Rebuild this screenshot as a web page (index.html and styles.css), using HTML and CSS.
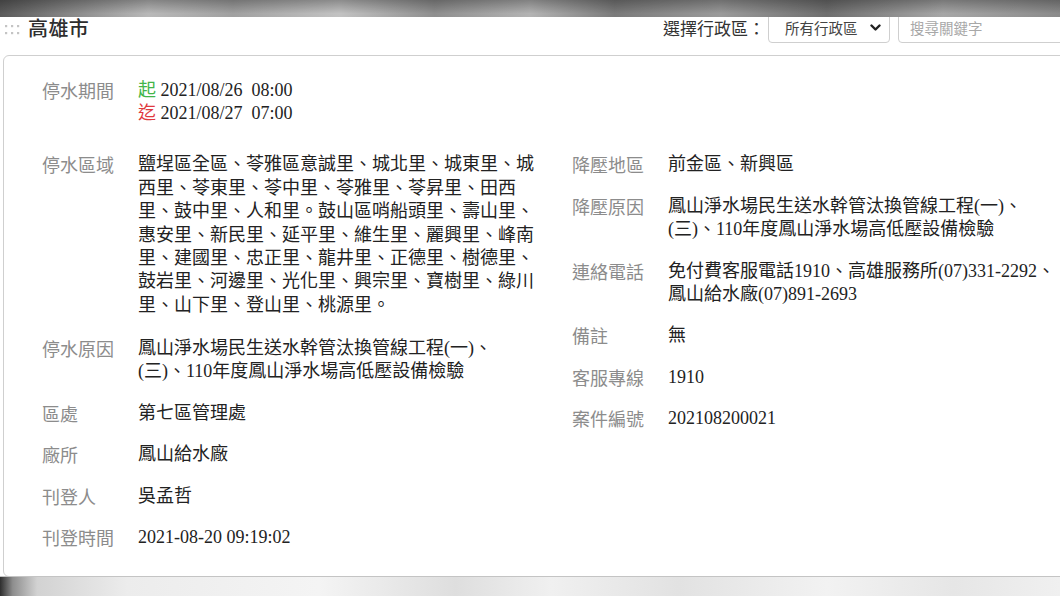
FILE: index.html
```html
<!DOCTYPE html>
<html lang="zh-Hant">
<head>
<meta charset="utf-8">
<title>高雄市 停水資訊</title>
<link rel="stylesheet" href="styles.css">
</head>
<body>
<div class="band-top"></div>
<div class="page">
  <header class="head">
    <div class="title-wrap">
      <svg class="grip" width="16" height="14" viewBox="0 0 16 14">
        <g fill="#c4c4c4">
          <rect x="0" y="3" width="2.2" height="2.2"/><rect x="6" y="3" width="2.2" height="2.2"/><rect x="12" y="3" width="2.2" height="2.2"/>
          <rect x="0" y="10" width="2.2" height="2.2"/><rect x="6" y="10" width="2.2" height="2.2"/><rect x="12" y="10" width="2.2" height="2.2"/>
        </g>
      </svg>
      <h1 class="title">高雄市</h1>
    </div>
    <div class="filters">
      <span class="filter-label">選擇行政區：</span>
      <div class="select">
        <span>所有行政區</span>
        <svg class="chev" width="11" height="8" viewBox="0 0 11 8"><path d="M1.5 1.5 L5.5 5.5 L9.5 1.5" fill="none" stroke="#222" stroke-width="2.4" stroke-linecap="round" stroke-linejoin="round"/></svg>
      </div>
      <div class="search">搜尋關鍵字</div>
    </div>
  </header>

  <section class="card">
    <div class="row period">
      <div class="label">停水期間</div>
      <div class="value">
        <div><span class="start">起</span> 2021/08/26&nbsp; 08:00</div>
        <div><span class="end">迄</span> 2021/08/27&nbsp; 07:00</div>
      </div>
    </div>
    <div class="cols">
      <div class="col">
        <div class="row">
          <div class="label">停水區域</div>
          <div class="value">鹽埕區全區、苓雅區意誠里、城北里、城東里、城西里、苓東里、苓中里、苓雅里、苓昇里、田西里、鼓中里、人和里。鼓山區哨船頭里、壽山里、惠安里、新民里、延平里、維生里、麗興里、峰南里、建國里、忠正里、龍井里、正德里、樹德里、鼓岩里、河邊里、光化里、興宗里、寶樹里、綠川里、山下里、登山里、桃源里。</div>
        </div>
        <div class="row gap-more">
          <div class="label">停水原因</div>
          <div class="value">鳳山淨水場民生送水幹管汰換管線工程(一)、<br>(三)、110年度鳳山淨水場高低壓設備檢驗</div>
        </div>
        <div class="row">
          <div class="label">區處</div>
          <div class="value">第七區管理處</div>
        </div>
        <div class="row">
          <div class="label">廠所</div>
          <div class="value">鳳山給水廠</div>
        </div>
        <div class="row">
          <div class="label">刊登人</div>
          <div class="value">吳孟哲</div>
        </div>
        <div class="row">
          <div class="label">刊登時間</div>
          <div class="value">2021-08-20 09:19:02</div>
        </div>
      </div>
      <div class="col">
        <div class="row">
          <div class="label">降壓地區</div>
          <div class="value">前金區、新興區</div>
        </div>
        <div class="row">
          <div class="label">降壓原因</div>
          <div class="value">鳳山淨水場民生送水幹管汰換管線工程(一)、<br>(三)、110年度鳳山淨水場高低壓設備檢驗</div>
        </div>
        <div class="row">
          <div class="label">連絡電話</div>
          <div class="value">免付費客服電話1910、高雄服務所(07)331-2292、<br>鳳山給水廠(07)891-2693</div>
        </div>
        <div class="row">
          <div class="label">備註</div>
          <div class="value">無</div>
        </div>
        <div class="row">
          <div class="label">客服專線</div>
          <div class="value">1910</div>
        </div>
        <div class="row">
          <div class="label">案件編號</div>
          <div class="value">202108200021</div>
        </div>
      </div>
    </div>
  </section>
</div>
<div class="band-bottom"></div>
</body>
</html>
```

FILE: styles.css
```css
html, body {
  margin: 0;
  padding: 0;
  overflow: hidden;
  background: #ffffff;
}
body {
  font-family: "Liberation Serif", "Noto Sans CJK TC", serif;
  color: #222;
  width: 1060px;
  height: 596px;
}
.page {
  width: 1090px;
}
.head {
  height: 55px;
  display: flex;
  align-items: center;
  justify-content: space-between;
}
.title-wrap {
  display: flex;
  align-items: center;
  padding-left: 5px;
}
.grip {
  margin-top: 3px;
}
.title {
  margin: 0 0 0 7px;
  font-family: "Noto Sans CJK TC", sans-serif;
  font-size: 20px;
  font-weight: 500;
  color: #2e2e2e;
  letter-spacing: 0.4px;
  line-height: 1;
}
.filters {
  display: flex;
  align-items: center;
  font-family: "Noto Sans CJK TC", sans-serif;
}
.filter-label {
  font-size: 17px;
  color: #333;
  margin-right: 3px;
}
.select {
  width: 122px;
  height: 30px;
  box-sizing: border-box;
  border: 1px solid #cfcfcf;
  border-radius: 4px;
  display: flex;
  align-items: center;
  justify-content: space-between;
  padding: 0 8px 0 16px;
  font-size: 14.5px;
  color: #444;
}
.chev {
  margin-top: 1px;
}
.search {
  width: 192px;
  height: 30px;
  box-sizing: border-box;
  border: 1px solid #cfcfcf;
  border-radius: 4px;
  margin-left: 8px;
  padding-left: 11px;
  display: flex;
  align-items: center;
  font-size: 14.5px;
  color: #a8a8a8;
}
.card {
  margin-left: 3px;
  border: 1px solid #cfcfcf;
  border-radius: 6px;
  padding: 23px 0 27px 38px;
  font-size: 18px;
  line-height: 23.4px;
}
.row {
  display: flex;
}
.label {
  width: 96px;
  flex: none;
  color: #8c8c8c;
  font-family: "Noto Sans CJK TC", sans-serif;
}
.value {
  width: 398px;
  color: #222;
}
.start {
  color: #43b54a;
}
.end {
  color: #e0393e;
}
.period {
  margin-bottom: 27.5px;
}
.cols {
  display: grid;
  grid-template-columns: 530px 1fr;
}
.col {
  display: flex;
  flex-direction: column;
  gap: 18px;
}
.gap-more {
  margin-top: 1.8px;
}
.band-top {
  position: fixed;
  top: 0;
  left: 0;
  width: 1060px;
  height: 17px;
  z-index: 5;
  background:
    linear-gradient(to bottom, rgba(0,0,0,0.28), rgba(0,0,0,0) 80%),
    linear-gradient(to right, #5a5a5a 0%, #8a8a8a 7%, #b8b8b8 14%, #a0a0a0 22%, #c2c2c2 32%, #8e8e8e 41%, #b3b3b3 50%, #7a7a7a 58%, #9a9a9a 68%, #6e6e6e 78%, #a6a6a6 89%, #8a8a8a 100%);
}
.band-bottom {
  position: fixed;
  left: 0;
  bottom: 0;
  width: 1060px;
  height: 19px;
  z-index: 5;
  border-top: 1px solid #c4c4c4;
  background:
    linear-gradient(to right, #2e2e2e 0%, #8e8e8e 1.2%, #d2d2d2 3.5%, #ececec 12%, #f4f4f4 30%, #dedede 43%, #f0f0f0 52%, #e2e2e2 64%, #f2f2f2 78%, #e6e6e6 90%, #f0f0f0 100%);
}
```
